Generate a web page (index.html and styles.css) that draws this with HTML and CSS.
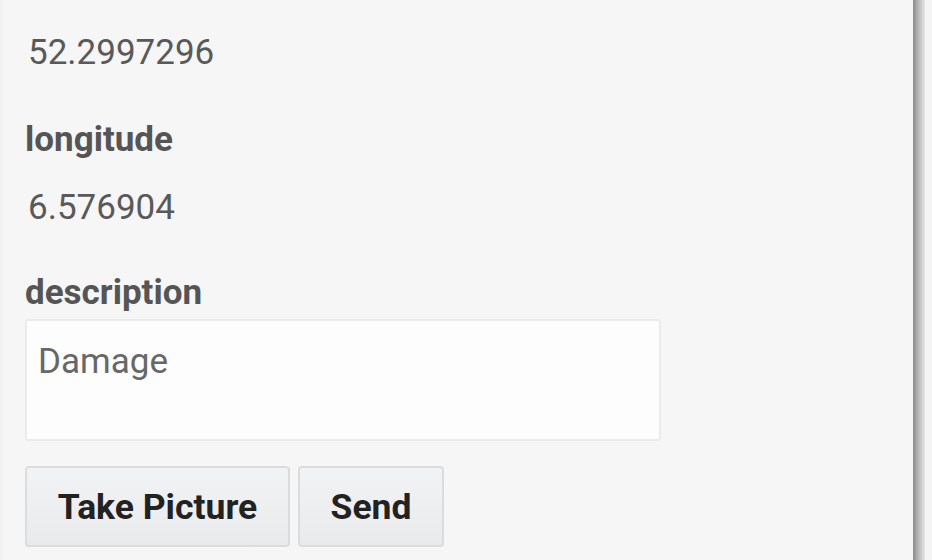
FILE: index.html
```html
<!DOCTYPE html>
<html lang="en">

<head>
    <meta charset="UTF-8">
    <meta name="viewport" content="width=device-width, initial-scale=1.0">
    <title>Report</title>
    <link rel="stylesheet" href="styles.css">
</head>

<body>
    <div class="screen">
        <div class="app">
            <div class="value first">52.2997296</div>

            <div class="label">longitude</div>
            <div class="value">6.576904</div>

            <div class="label desc-label">description</div>
            <div class="desc">Damage</div>

            <div class="actions">
                <button class="btn pic" type="button">Take Picture</button>
                <button class="btn send" type="button">Send</button>
            </div>
        </div>
        <div class="edge"></div>
        <div class="outside"></div>
    </div>
</body>

</html>
```

FILE: styles.css
```css
body {
    margin: 0;
    border: 0;
    background-color: #f6f6f6;
    font-family: Roboto, "Liberation Sans", sans-serif;
}

.screen {
    display: flex;
    height: 560px;
    overflow: hidden;
}

.app {
    width: 888px;
    padding-left: 25px;
    background: linear-gradient(to right, #efefef 0px, #f6f6f6 5px);
}

.edge {
    width: 12px;
    background: linear-gradient(to right, #8a8a8a 0px, #a4a4a4 3px, #c4c4c4 7px, #e6e6e6 12px);
}

.outside {
    flex: 1;
    background-color: #f4f4f4;
}

.value {
    font-size: 35px;
    line-height: 40px;
    color: #595959;
    padding-left: 3px;
}

.first {
    margin-top: 33px;
}

.label {
    font-size: 35px;
    line-height: 40px;
    font-weight: bold;
    color: #555555;
    margin-top: 47px;
}

.label + .value {
    margin-top: 28px;
}

.desc-label {
    margin-top: 45px;
}

.desc {
    box-sizing: border-box;
    width: 636px;
    height: 122px;
    margin-top: 6px;
    padding: 21px 0 0 11px;
    font-size: 35px;
    line-height: 40px;
    color: #676767;
    background-color: #fdfdfe;
    border: 2px solid #ebebec;
    border-radius: 3px;
}

.actions {
    display: flex;
    gap: 8px;
    margin-top: 25px;
}

.btn {
    height: 81px;
    font-family: Roboto, "Liberation Sans", sans-serif;
    font-size: 35.5px;
    font-weight: bold;
    color: #222222;
    background: linear-gradient(#f2f3f4, #e9eaeb);
    border: 2px solid #dcdcdc;
    border-radius: 4px;
}

.pic {
    width: 265px;
}

.send {
    width: 146px;
}
```
